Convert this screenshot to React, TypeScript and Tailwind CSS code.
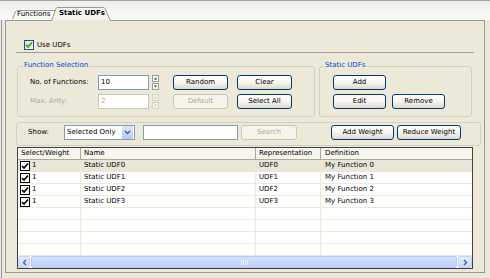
import React from "react";

function Btn({ className, children, disabled }: { className: string; children: React.ReactNode; disabled?: boolean }) {
  return (
    <div
      className={
        "h-[15px] shrink-0 flex items-center justify-center rounded-[3px] border " +
        (disabled
          ? "border-[#c9c7ba] bg-[#f5f4ea] text-[#aca899] "
          : "border-[#003c74] bg-linear-to-b from-[#ffffff] via-[#f6f5f0] to-[#dcd8cb] text-black ") +
        className
      }
    >
      {children}
    </div>
  );
}

function Spinner({ disabled }: { disabled?: boolean }) {
  const b = disabled ? "border-[#d6d4c8] bg-[#f3f2ea]" : "border-[#9a9a9a] bg-[#f7f6f2]";
  const f = disabled ? "#c9c7ba" : "#333333";
  return (
    <div className="ml-[3px] flex flex-col gap-px w-[7px] h-[15px] shrink-0">
      <div className={"h-[7px] border flex items-center justify-center " + b}>
        <svg width="5" height="3" viewBox="0 0 5 3"><path d="M2.5 0.5 L4 2.5 L1 2.5 Z" fill={f} /></svg>
      </div>
      <div className={"h-[7px] border flex items-center justify-center " + b}>
        <svg width="5" height="3" viewBox="0 0 5 3"><path d="M1 0.5 L4 0.5 L2.5 2.5 Z" fill={f} /></svg>
      </div>
    </div>
  );
}

function TableCheck() {
  return (
    <div className="w-[10px] h-[10px] border border-black bg-white flex items-center justify-center shrink-0">
      <svg width="8" height="8" viewBox="0 0 8 8">
        <path d="M1 4 L3 6 L7 1.5" stroke="#000" strokeWidth="1.6" fill="none" />
      </svg>
    </div>
  );
}

const rows = [0, 1, 2, 3];

export default function App() {
  return (
    <div className="w-[490px] h-[278px] bg-[#ece9d8] overflow-hidden flex flex-col font-['DejaVu_Sans',sans-serif] text-[7px] leading-none text-black">
      <div className="h-px shrink-0 bg-[#a3a29c]" />
      <div className="h-[19px] shrink-0 bg-linear-to-b from-[#efeee8] to-[#fbfbf9] flex items-end pl-[12px] relative z-10">
        <div className="relative w-[44px] h-[9px] mb-px flex items-center pl-[5px]">
          <svg className="absolute inset-0" width="44" height="9" viewBox="0 0 44 9">
            <path d="M0.5 9 L3.5 1.5 Q4 0.5 5.5 0.5 L43.5 0.5 L43.5 9" fill="#f8f8f4" stroke="#919b9c" />
          </svg>
          <span className="relative">Functions</span>
        </div>
        <div className="relative -ml-[5px] w-[60px] h-[14px] -mb-px flex items-start pt-[3px] pl-[8px]">
          <svg className="absolute inset-0" width="60" height="14" viewBox="0 0 60 14">
            <path d="M0 14 L0.5 14 L5 1.5 Q5.5 0.5 7 0.5 L52 0.5 Q53.5 0.5 54 1.5 L59.5 14 L60 14" fill="#f6f5f0" stroke="#919b9c" />
            <rect x="1" y="13" width="58" height="1" fill="#ece9d8" />
          </svg>
          <span className="relative font-bold">Static UDFs</span>
        </div>
      </div>
      <div className="flex-1 flex">
        <div className="w-[5px] shrink-0 flex">
          <div className="w-px" />
          <div className="w-px bg-[#8c90aa]" />
        </div>
        <div className="w-[480px] h-[253px] shrink-0 border border-[#919b9c] bg-[#ece9d8] flex flex-col">
          {/* Use UDFs */}
          <div className="mt-[19px] ml-[18px] h-[10px] flex items-center gap-[3px]">
            <div className="w-[10px] h-[10px] border border-[#1c5180] bg-linear-to-br from-[#dcdcd7] to-white flex items-center justify-center">
              <svg width="8" height="8" viewBox="0 0 8 8">
                <path d="M1 3.8 L3 6 L7 1.5" stroke="#21a121" strokeWidth="1.7" fill="none" />
              </svg>
            </div>
            <span>Use UDFs</span>
          </div>
          <div className="mt-[2px] ml-[10px] w-[458px] h-px bg-[#a0a0a0]" />

          {/* Groups */}
          <div className="mt-[13px] ml-[11px] flex">
            <div className="relative w-[298px] h-[51px] border border-[#d0d0bf] rounded-[3px] pt-[8px] pl-[12px]">
              <span className="absolute -top-[5px] left-[5px] px-px bg-[#ece9d8] text-[#0046d5]">Function Selection</span>
              <div className="flex items-center h-[15px]">
                <span className="w-[68px] shrink-0">No. of Functions:</span>
                <div className="w-[51px] h-[15px] border border-[#7f9db9] bg-white flex items-center pl-[2px]">10</div>
                <Spinner />
                <Btn className="ml-[14px] w-[55px]">Random</Btn>
                <Btn className="ml-[9px] w-[55px]">Clear</Btn>
              </div>
              <div className="mt-[4px] flex items-center h-[15px]">
                <span className="w-[68px] shrink-0 text-[#aca899]">Max. Arity:</span>
                <div className="w-[51px] h-[15px] border border-[#c9c7ba] bg-white flex items-center pl-[2px] text-[#aca899]">2</div>
                <Spinner disabled />
                <Btn className="ml-[14px] w-[55px]" disabled>Default</Btn>
                <Btn className="ml-[9px] w-[55px]">Select All</Btn>
              </div>
            </div>
            <div className="relative ml-[4px] w-[153px] h-[51px] border border-[#d0d0bf] rounded-[3px] pt-[8px] pl-[13px]">
              <span className="absolute -top-[5px] left-[4px] px-px bg-[#ece9d8] text-[#0046d5]">Static UDFs</span>
              <div className="flex h-[15px]">
                <Btn className="w-[53px]">Add</Btn>
              </div>
              <div className="mt-[4px] flex h-[15px]">
                <Btn className="w-[53px]">Edit</Btn>
                <Btn className="ml-[6px] w-[53px]">Remove</Btn>
              </div>
            </div>
          </div>

          {/* Show bar */}
          <div className="mt-[5px] ml-[10px] w-[465px] h-[24px] border border-[#d0d0bf] rounded-[3px] flex items-start pt-[2px] pl-[11px]">
            <span className="w-[36px] shrink-0 h-[15px] flex items-center">Show:</span>
            <div className="w-[71px] h-[15px] border border-[#7f9db9] bg-white flex items-center">
              <span className="flex-1 pl-[2px]">Selected Only</span>
              <div className="w-[11px] h-[13px] mr-px bg-linear-to-b from-[#d9e4fd] to-[#b9cbf7] rounded-[1px] flex items-center justify-center">
                <svg width="7" height="5" viewBox="0 0 7 5">
                  <path d="M1 1 L3.5 3.5 L6 1" stroke="#4d6185" strokeWidth="1.4" fill="none" />
                </svg>
              </div>
            </div>
            <div className="ml-[8px] w-[95px] h-[15px] border border-[#7f9db9] bg-white" />
            <Btn className="ml-[3px] w-[56px]" disabled>Search</Btn>
            <Btn className="ml-[34px] w-[63px]">Add Weight</Btn>
            <Btn className="ml-[3px] w-[64px]">Reduce Weight</Btn>
          </div>

          {/* Table */}
          <div className="mt-px ml-[11px] w-[456px] h-[122px] border border-[#404040] bg-white flex flex-col">
            <div className="h-[12px] flex bg-[#f6f5f0] border-b border-[#aca899]">
              <div className="w-[63px] border-r border-[#aca899] pl-[3px] flex items-center">Select/Weight</div>
              <div className="w-[175px] border-r border-[#aca899] pl-[3px] flex items-center">Name</div>
              <div className="w-[65px] border-r border-[#aca899] pl-[3px] flex items-center">Representation</div>
              <div className="flex-1 pl-[4px] flex items-center">Definition</div>
            </div>
            {rows.map((i) => (
              <div key={i} className={"h-[12px] flex border-b border-[#ece9d8] " + (i === 0 ? "bg-[#e9e6d9]" : "bg-white")}>
                <div className="w-[63px] border-r border-[#ece9d8] pl-[2px] flex items-center gap-[2px]">
                  <TableCheck />
                  <span>1</span>
                </div>
                <div className="w-[175px] border-r border-[#ece9d8] pl-[3px] flex items-center">Static UDF{i}</div>
                <div className="w-[65px] border-r border-[#ece9d8] pl-[3px] flex items-center">UDF{i}</div>
                <div className="flex-1 pl-[4px] flex items-center">My Function {i}</div>
              </div>
            ))}
            {[0, 1, 2, 3].map((i) => (
              <div key={"e" + i} className="h-[12px] flex border-b border-[#ece9d8]">
                <div className="w-[63px] border-r border-[#ece9d8]" />
                <div className="w-[175px] border-r border-[#ece9d8]" />
                <div className="w-[65px] border-r border-[#ece9d8]" />
                <div className="flex-1" />
              </div>
            ))}
            {/* horizontal scrollbar */}
            <div className="h-[12px] flex bg-[#fdfdfa]">
              <div className="w-[12px] border border-[#c3d3fd] bg-linear-to-b from-[#e6eefe] to-[#c6d6fb] rounded-[2px] flex items-center justify-center">
                <svg width="5" height="7" viewBox="0 0 5 7">
                  <path d="M4 1 L1.5 3.5 L4 6" stroke="#4d6185" strokeWidth="1.4" fill="none" />
                </svg>
              </div>
              <div className="flex-1 ml-px mr-px border border-[#b6c9f5] bg-linear-to-b from-[#d4e1fd] to-[#bcd0f8] rounded-[2px] flex items-center justify-center">
                <svg width="7" height="5" viewBox="0 0 7 5">
                  <path d="M0.5 0 V5 M2.5 0 V5 M4.5 0 V5 M6.5 0 V5" stroke="#eef3fe" strokeWidth="1" />
                </svg>
              </div>
              <div className="w-[14px] border border-[#c3d3fd] bg-linear-to-b from-[#e6eefe] to-[#c6d6fb] rounded-[2px] flex items-center justify-center">
                <svg width="5" height="7" viewBox="0 0 5 7">
                  <path d="M1 1 L3.5 3.5 L1 6" stroke="#4d6185" strokeWidth="1.4" fill="none" />
                </svg>
              </div>
            </div>
          </div>
        </div>
      </div>
    </div>
  );
}
